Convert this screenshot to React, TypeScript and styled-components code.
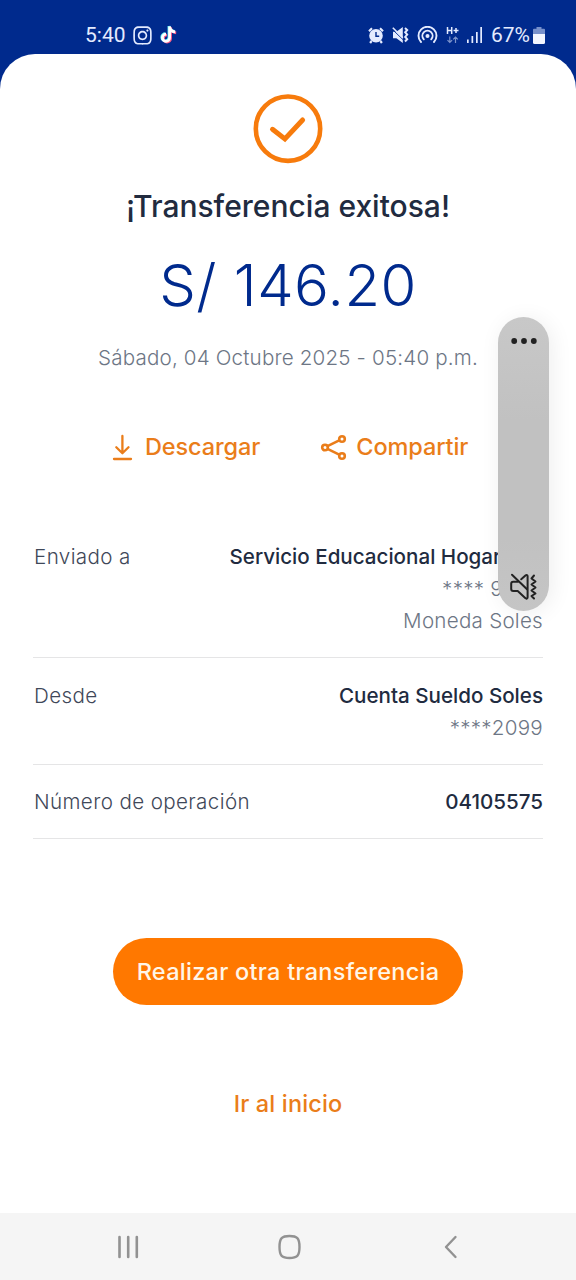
import React from 'react';

import { FaInstagram } from 'react-icons/fa';
import styled, { createGlobalStyle } from 'styled-components';

const GlobalStyle = createGlobalStyle`
  *, *::before, *::after {
    box-sizing: border-box;
  }

  body {
    margin: 0;
    background: #ffffff;
  }
`;

const colors = {
  brand: '#002a8d',
  orange: '#ff7800',
  accent: '#ea7d1a',
  ink: '#212b3f',
  label: '#3f4859',
  muted: '#6d7685',
  line: '#e5e5e6',
};

const Screen = styled.div`
  position: relative;
  display: flex;
  flex-direction: column;
  width: 576px;
  height: 1280px;
  overflow: hidden;
  background: ${colors.brand};
  font-family: Inter, 'Noto Sans', sans-serif;
`;

const StatusBar = styled.header`
  display: flex;
  align-items: center;
  justify-content: space-between;
  height: 54px;
  padding: 16px 31px 0 85px;
  color: #e4ebff;
`;

const StatusGroup = styled.div<{ $gap: number }>`
  display: flex;
  align-items: center;
  gap: ${({ $gap }) => $gap}px;

  svg {
    display: block;
    flex: none;
  }
`;

const StatusText = styled.span`
  font-family: Roboto, sans-serif;
  font-size: 21px;
  line-height: 24px;
`;

const Sheet = styled.main`
  display: flex;
  flex: 1;
  flex-direction: column;
  align-items: center;
  padding-top: 40px;
  border-radius: 35px 35px 0 0;
  background: #ffffff;
`;

const Title = styled.h1`
  margin: 24px 0 0;
  color: ${colors.ink};
  font-size: 30px;
  font-weight: 500;
  line-height: 36px;
  white-space: nowrap;
`;

const Amount = styled.p`
  margin: 25px 0 0;
  color: ${colors.brand};
  font-size: 58px;
  font-weight: 300;
  line-height: 72px;
  letter-spacing: 0.5px;
  white-space: nowrap;
`;

const DateText = styled.p`
  margin: 24px 0 0;
  color: ${colors.muted};
  font-size: 20.6px;
  font-weight: 300;
  line-height: 26px;
  letter-spacing: 0.17px;
  white-space: nowrap;
`;

const Actions = styled.div`
  display: flex;
  gap: 60px;
  align-self: stretch;
  margin-top: 61px;
  padding-left: 111px;
`;

const ActionButton = styled.button<{ $gap: number }>`
  display: flex;
  align-items: center;
  gap: ${({ $gap }) => $gap}px;
  height: 30px;
  padding: 0;
  border: 0;
  background: none;
  color: ${colors.accent};
  font: 500 23.5px/30px Inter, 'Noto Sans', sans-serif;
  letter-spacing: -0.1px;
  white-space: nowrap;
`;

const Details = styled.dl`
  align-self: stretch;
  margin: 79px 33px 0;
`;

const Row = styled.div<{ $top: number; $bottom: number }>`
  display: flex;
  justify-content: space-between;
  padding: ${({ $top }) => $top}px 0 ${({ $bottom }) => $bottom}px 1px;
  border-bottom: 1px solid ${colors.line};
  font-size: 20.6px;
  line-height: 32px;
  white-space: nowrap;
`;

const Label = styled.dt`
  color: ${colors.label};
  font-weight: 300;
  letter-spacing: 0.38px;
`;

const Values = styled.dd`
  display: flex;
  flex-direction: column;
  align-items: flex-end;
  margin: 0;
`;

const Value = styled.span<{ $inset?: number }>`
  padding-right: ${({ $inset = 0 }) => $inset}px;
  color: ${colors.ink};
  font-weight: 500;
`;

const SubValue = styled(Value)`
  color: ${colors.muted};
  font-weight: 300;
  letter-spacing: 0.25px;
`;

const PrimaryButton = styled.button`
  width: 350px;
  height: 67px;
  margin-top: 99px;
  padding: 0;
  border: 0;
  border-radius: 34px;
  background: ${colors.orange};
  color: #fff6e8;
  font: 500 23.5px/30px Inter, 'Noto Sans', sans-serif;
  letter-spacing: 0.27px;
  white-space: nowrap;
`;

const LinkButton = styled(PrimaryButton)`
  width: auto;
  height: 30px;
  margin-top: 84px;
  background: none;
  color: ${colors.accent};
  letter-spacing: 0.15px;
`;

const NavBar = styled.nav`
  display: flex;
  align-items: center;
  justify-content: space-between;
  height: 67px;
  padding: 0 118px 0 117px;
  background: #f5f5f5;
`;

// floats over the page, like the system volume slider does
const VolumePanel = styled.aside`
  position: absolute;
  top: 317px;
  left: 498px;
  display: flex;
  flex-direction: column;
  align-items: center;
  justify-content: space-between;
  width: 51px;
  height: 294px;
  padding: 20px 0 10px;
  border-radius: 26px;
  background: linear-gradient(#c8c8c8, #c1c1c1 35%, #c1c1c1 75%, #c5c5c5);
  box-shadow: 3px 2px 22px rgba(0, 0, 0, 0.07);
`;

const TikTokIcon = () => {
  const note = 'M9.6 1v11.2a3.6 3.6 0 1 1-3.6-3.6M9.6 1c.3 3.2 2.5 5.2 5.6 5.4';

  return (
    <svg width="19" height="22" viewBox="-1 -1 19 21" fill="none" strokeWidth="2.7">
      <path d={note} stroke="#ff5c86" transform="translate(1 .9)" />
      <path d={note} stroke="#5ff0f5" transform="translate(-.7 -.5)" />
      <path d={note} stroke="#ffffff" />
    </svg>
  );
};

const AlarmIcon = () => (
  <svg width="16" height="17" viewBox="0 0 16 17">
    <path d="M1 4.2 4 1.3M15 4.2 12 1.3M3.6 14l-1.5 2M12.4 14l1.5 2" stroke="currentColor" strokeWidth="2.2" />
    <circle cx="8" cy="8.8" r="6.8" fill="currentColor" />
    <path d="M8 5v4.2h3.2" fill="none" stroke={colors.brand} strokeWidth="1.4" />
  </svg>
);

const MutedIcon = () => (
  <svg width="17" height="18" viewBox="0 0 17 18">
    <path d="M1 5.8h3.4L10.8 1v16l-6.4-4.8H1z" fill="currentColor" />
    <path d="m0 3 11 10.6" stroke={colors.brand} strokeWidth="1" />
    <path d="m.8 1.8 10 10" stroke="currentColor" strokeWidth="1.6" />
    <path d="m13 2 2.2 2-2 2.3 2 2.3-2 2.3 2 2.3-2.2 2.3" fill="none" stroke="currentColor" strokeWidth="2" />
  </svg>
);

const HotspotIcon = () => (
  <svg width="21" height="18" viewBox="0 0 21 18" fill="none" stroke="currentColor" strokeWidth="1.9" strokeLinecap="round">
    <path d="M4 16A9 9 0 1 1 17 16" />
    <path d="M6.8 13.3a5.1 5.1 0 1 1 7.4 0" />
    <circle cx="10.5" cy="10" r="2" fill="currentColor" stroke="none" />
  </svg>
);

const NetworkIcon = () => (
  <svg width="13" height="18" viewBox="0 0 13 18" fill="none" stroke="currentColor" strokeWidth="1.5">
    <path d="M1.5 1v7M5.7 1v7M1.5 4.5h4.2M7.5 4.5h5M10 2v5" />
    <path d="M3.8 10.5v6M1.5 14.2l2.3 2.3 2.3-2.3M9.5 17v-6M7.2 13.3 9.5 11l2.3 2.3" strokeWidth="1.2" opacity=".55" />
  </svg>
);

const SignalIcon = () => (
  <svg width="16" height="16" viewBox="0 0 16 16" fill="currentColor">
    <path d="M0 12.5h1.7V16H0zM4.5 9h1.7v7H4.5zM9 5h1.7v11H9zM13.3 0H15v16h-1.7z" />
  </svg>
);

const BatteryIcon = () => (
  <svg width="12" height="17" viewBox="0 0 12 17">
    <path d="M3.5 0h5v1.8H11a1 1 0 0 1 1 1V7H0V2.8a1 1 0 0 1 1-1h2.5z" fill="#7790cb" />
    <path d="M0 7h12v8.5a1.5 1.5 0 0 1-1.5 1.5h-9A1.5 1.5 0 0 1 0 15.5z" fill="#f3f6ff" />
  </svg>
);

const SuccessIcon = () => (
  <svg width="70" height="70" viewBox="0 0 70 70" fill="none" stroke="#f77b0c" strokeWidth="4.6">
    <circle cx="35" cy="34.7" r="32.2" />
    <path d="m19.5 35.3 12.4 9.6L49.6 26" strokeWidth="5" strokeLinecap="round" />
  </svg>
);

const DownloadIcon = () => (
  <svg width="22" height="27" viewBox="0 0 22 27" fill="none" stroke="currentColor" strokeWidth="2.3" strokeLinecap="round" strokeLinejoin="round">
    <path d="M11.4 2v17M5.3 13.3l6.1 6 6.1-6M3 25h17" />
  </svg>
);

const ShareIcon = () => (
  <svg width="27" height="27" viewBox="0 0 27 27" fill="none" stroke="currentColor" strokeWidth="2.6">
    <circle cx="5" cy="13.5" r="2.8" />
    <circle cx="22" cy="5" r="2.8" />
    <circle cx="22" cy="22" r="2.8" />
    <path d="m7.5 12.2 11.7-5.8M7.5 14.8l11.7 5.8" />
  </svg>
);

const VibrateIcon = () => (
  <svg width="28" height="28" viewBox="0 0 28 28" fill="none" stroke="#222222" strokeWidth="2" strokeLinecap="round" strokeLinejoin="round">
    <path d="M8 8.8H3.2a2 2 0 0 0-2 2V16a2 2 0 0 0 2 2h4.5l7.8 7.2a1.2 1.2 0 0 0 2.1-.9V3.2c0-1-1-1.6-1.9-.9l-4.5 4" />
    <path d="m2 1.8 15 14.5" />
    <path d="m24 2.5-2.5 3 4 3-4 3 4 3-4 3 4 3-4 2.5 2.5 2.5" />
  </svg>
);

const details = [
  {
    label: 'Enviado a',
    value: 'Servicio Educacional Hogar',
    inset: 42,
    lines: [
      { text: '**** 9', inset: 40 },
      { text: 'Moneda Soles', inset: 0 },
    ],
    top: 0,
    bottom: 20,
  },
  { label: 'Desde', value: 'Cuenta Sueldo Soles', lines: [{ text: '****2099', inset: 0 }], top: 22, bottom: 20 },
  { label: 'Número de operación', value: '04105575', lines: [], top: 21, bottom: 20 },
];

const App = () => (
  <>
    <GlobalStyle />
    <Screen>
      <StatusBar>
        <StatusGroup $gap={6}>
          <StatusText>5:40</StatusText>
          <FaInstagram size={21} />
          <TikTokIcon />
        </StatusGroup>
        <StatusGroup $gap={8}>
          <AlarmIcon />
          <MutedIcon />
          <HotspotIcon />
          <NetworkIcon />
          <SignalIcon />
          <StatusGroup $gap={3}>
            <StatusText>67%</StatusText>
            <BatteryIcon />
          </StatusGroup>
        </StatusGroup>
      </StatusBar>

      <Sheet>
        <SuccessIcon />
        <Title>¡Transferencia exitosa!</Title>
        <Amount>S/ 146.20</Amount>
        <DateText>Sábado, 04 Octubre 2025 - 05:40 p.m.</DateText>

        <Actions>
          <ActionButton $gap={12}>
            <DownloadIcon />
            Descargar
          </ActionButton>
          <ActionButton $gap={9}>
            <ShareIcon />
            Compartir
          </ActionButton>
        </Actions>

        <Details>
          {details.map(({ label, value, inset, lines, top, bottom }) => (
            <Row key={label} $top={top} $bottom={bottom}>
              <Label>{label}</Label>
              <Values>
                <Value $inset={inset}>{value}</Value>
                {lines.map((line) => (
                  <SubValue key={line.text} $inset={line.inset}>
                    {line.text}
                  </SubValue>
                ))}
              </Values>
            </Row>
          ))}
        </Details>

        <PrimaryButton>Realizar otra transferencia</PrimaryButton>
        <LinkButton>Ir al inicio</LinkButton>
      </Sheet>

      <NavBar>
        <svg width="22" height="24" viewBox="0 0 22 24" stroke="#929292" strokeWidth="2.6" strokeLinecap="round">
          <path d="M2.5 2v20M11.2 2v20M19.8 2v20" />
        </svg>
        <svg width="24" height="26" viewBox="0 0 24 26" fill="none" stroke="#929292" strokeWidth="2.4">
          <path d="M11.500 2c7.500 0 10 2 10 11s-2.500 11-10 11-10-2-10-11 2.500-11 10-11z" />
        </svg>
        <svg width="18" height="24" viewBox="-4 0 18 24" fill="none" stroke="#929292" strokeWidth="2.4" strokeLinecap="round" strokeLinejoin="round">
          <path d="M11.5 2 2 12l9.5 10" />
        </svg>
      </NavBar>

      <VolumePanel>
        <svg width="26" height="8" viewBox="0 0 26 8" fill="#222222">
          <circle cx="3.2" cy="4" r="2.9" />
          <circle cx="13" cy="4" r="2.9" />
          <circle cx="22.8" cy="4" r="2.9" />
        </svg>
        <VibrateIcon />
      </VolumePanel>
    </Screen>
  </>
);

export default App;
